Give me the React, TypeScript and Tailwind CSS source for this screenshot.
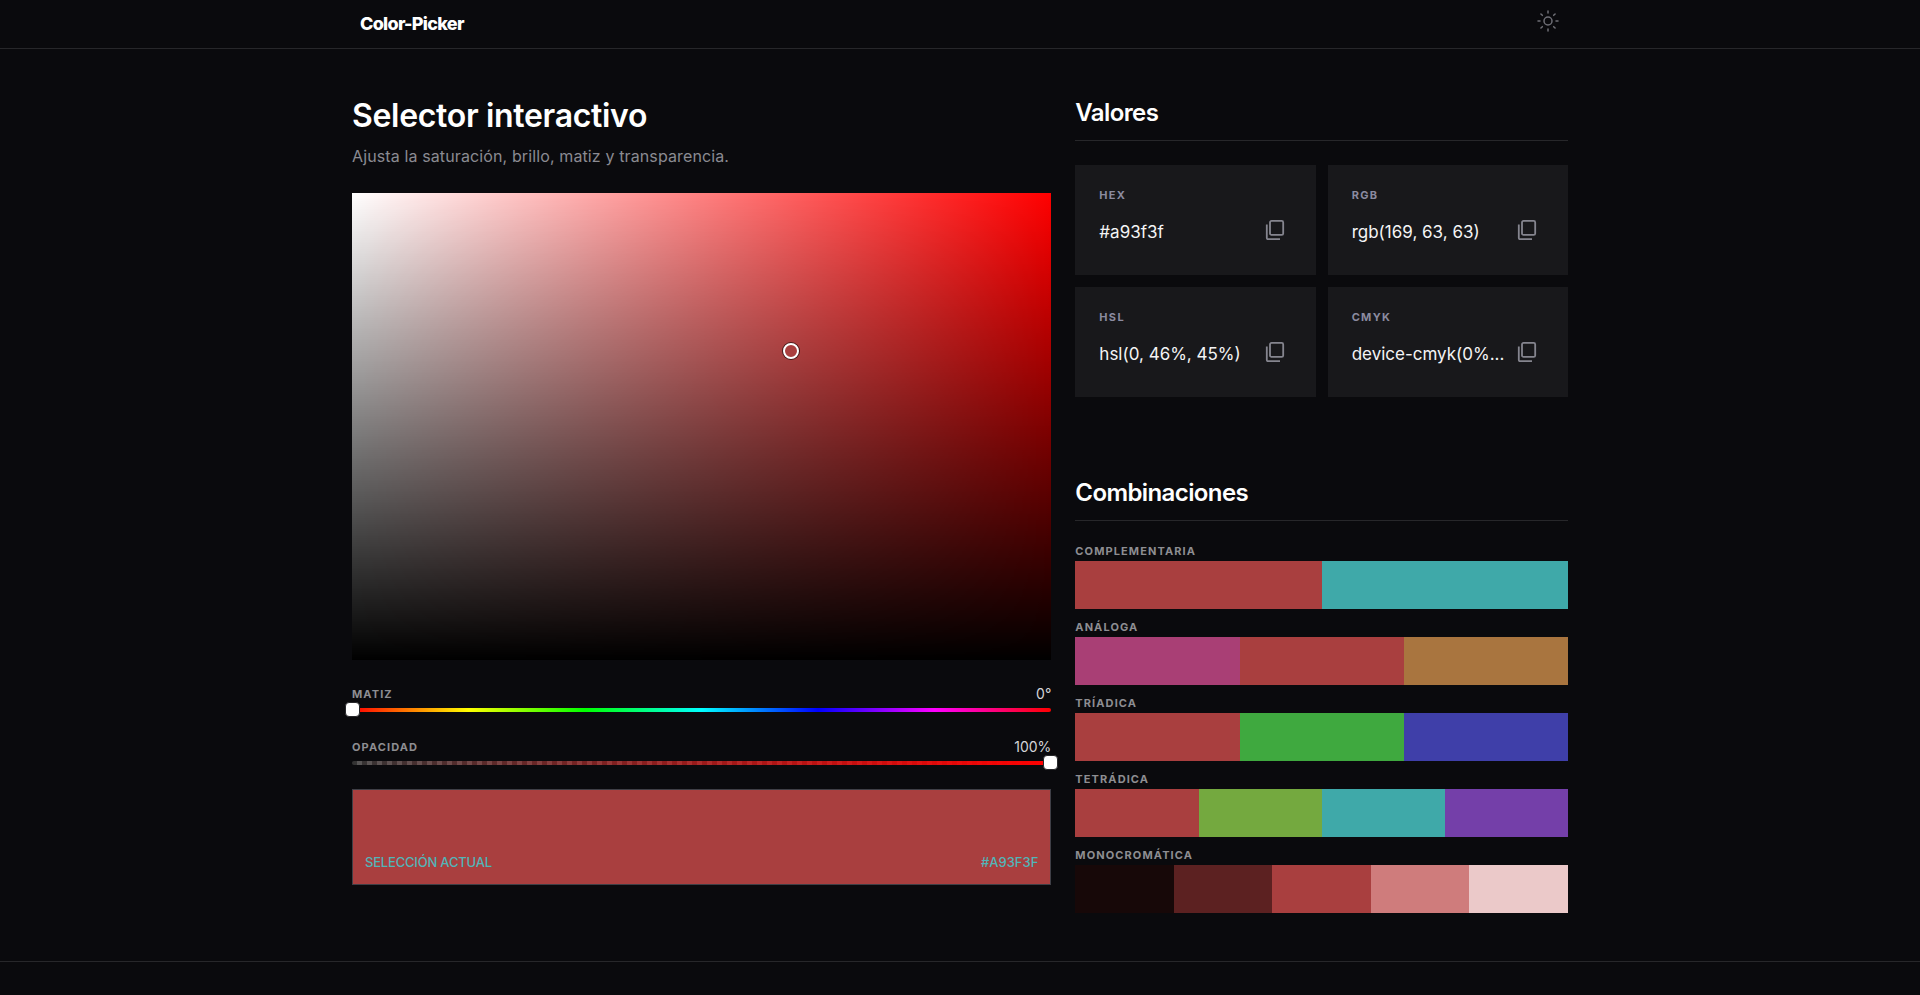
import { Sun } from 'lucide-react'

const values = [
  { label: 'HEX', value: '#a93f3f' },
  { label: 'RGB', value: 'rgb(169, 63, 63)' },
  { label: 'HSL', value: 'hsl(0, 46%, 45%)' },
  { label: 'CMYK', value: 'device-cmyk(0%...' }
]

const combos = [
  { name: 'COMPLEMENTARIA', colors: ['#a93f3f', '#3fa9a9'] },
  { name: 'ANÁLOGA', colors: ['#a93f75', '#a93f3f', '#a9753f'] },
  { name: 'TRÍADICA', colors: ['#a93f3f', '#3fa93f', '#3f3fa9'] },
  { name: 'TETRÁDICA', colors: ['#a93f3f', '#74a93f', '#3fa9a9', '#743fa9'] },
  { name: 'MONOCROMÁTICA', colors: ['#170808', '#5c2121', '#a93f3f', '#cf7c7c', '#ebc9c9'] }
]

function CopyIcon() {
  return (
    <svg width="20" height="20" viewBox="0 0 20 20" fill="none" stroke="currentColor" strokeWidth="1.8">
      <rect x="5" y="0.9" width="13.2" height="14" rx="1.5" />
      <path d="M1.8 4.5V18a1.2 1.2 0 0 0 1.2 1.2h12" />
    </svg>
  )
}

export default function App() {
  return (
    <div className="min-h-screen flex flex-col bg-[#0a0a0d] text-white font-['Inter',sans-serif]">
      {/* Header */}
      <header className="h-[49px] border-b border-[#27272a]">
        <div className="mx-auto w-[1216px] h-full px-2 flex items-center justify-between">
          <span className="text-lg font-extrabold tracking-[-0.04em]">Color-Picker</span>
          <button className="mb-[6px] text-[#6f6f76]">
            <Sun size={24} strokeWidth={1.5} />
          </button>
        </div>
      </header>

      {/* Main */}
      <main className="flex-1">
        <div className="mx-auto w-[1216px] pt-12 grid grid-cols-12 gap-6">
          <section className="col-span-7">
            <h1 className="mt-px text-[32px] leading-9 font-semibold tracking-[-0.01em]">Selector interactivo</h1>
            <p className="mt-3 text-base leading-5 tracking-[0.0075em] text-[#8b8b92]">
              Ajusta la saturación, brillo, matiz y transparencia.
            </p>

            <div className="relative mt-[27px] h-[467px] bg-[linear-gradient(to_top,#000,transparent),linear-gradient(to_right,#fff,#f00)]">
              <div className="absolute left-[431px] top-[150px] w-4 h-4 rounded-full border-2 border-white bg-[#a93f3f] shadow-[0_0_0_1px_rgba(0,0,0,0.6)]"></div>
            </div>

            <div className="mt-[26px] flex items-center justify-between h-4">
              <span className="text-[11px] font-bold tracking-[0.1em] text-[#8e8e92]">MATIZ</span>
              <span className="text-sm text-[#d4d4d8]">0°</span>
            </div>
            <div className="relative mt-[6px] h-1 rounded-full bg-[linear-gradient(to_right,#f00,#ff0,#0f0,#0ff,#00f,#f0f,#f00)]">
              <div className="absolute -left-[7px] -top-[6px] w-[15px] h-[15px] rounded-[4px] bg-white border border-[#27272a]"></div>
            </div>

            <div className="mt-[27px] flex items-center justify-between h-4">
              <span className="text-[11px] font-bold tracking-[0.1em] text-[#8e8e92]">OPACIDAD</span>
              <span className="text-sm text-[#d4d4d8]">100%</span>
            </div>
            <div className="relative mt-[6px] h-1 rounded-full bg-[repeating-conic-gradient(#555_0_25%,#333_0_50%)] bg-[length:10px_10px]">
              <div className="absolute inset-0 rounded-full bg-[linear-gradient(to_right,transparent,#f00)]"></div>
              <div className="absolute -right-[7px] -top-[6px] w-[15px] h-[15px] rounded-[4px] bg-white border border-[#27272a]"></div>
            </div>

            <div className="mt-6 h-24 px-3 pb-3 flex items-end justify-between border border-[#3f3f46] bg-[#a93f3f] text-[13px] font-medium text-[#52b5b8]">
              <span className="tracking-[-0.015em]">SELECCIÓN ACTUAL</span>
              <span>#A93F3F</span>
            </div>
          </section>

          <section className="col-span-5">
            <h2 className="text-2xl font-semibold tracking-tight pb-[11px] border-b border-[#27272a]">Valores</h2>
            <div className="mt-6 grid grid-cols-2 gap-3">
              {values.map(item => (
                <div key={item.label} className="h-[110px] bg-[#18181b] pl-6 pr-[23px] pt-6">
                  <div className="text-[11px] leading-3 font-bold tracking-[0.12em] text-[#8b8ba0]">{item.label}</div>
                  <div className="mt-[11px] flex items-center justify-between">
                    <span className="min-w-0 flex-1 whitespace-nowrap text-[17px] mt-[6px] text-[#f4f4f5]">{item.value}</span>
                    <button className="shrink-0 p-2 text-[#85858f]">
                      <CopyIcon />
                    </button>
                  </div>
                </div>
              ))}
            </div>

            <h2 className="mt-20 text-2xl font-semibold tracking-tight pb-[11px] border-b border-[#27272a]">Combinaciones</h2>
            <div className="mt-5 flex flex-col gap-2">
              {combos.map(combo => (
                <div key={combo.name}>
                  <div className="h-4 mb-1 text-[11px] leading-5 font-bold tracking-[0.1em] text-[#8e8e92]">{combo.name}</div>
                  <div className="flex h-12">
                    {combo.colors.map(color => (
                      <div key={color} className="flex-1" style={{ backgroundColor: color }}></div>
                    ))}
                  </div>
                </div>
              ))}
            </div>
          </section>
        </div>
      </main>

      {/* Footer */}
      <footer className="h-[34px] border-t border-[#27272a]"></footer>
    </div>
  )
}
